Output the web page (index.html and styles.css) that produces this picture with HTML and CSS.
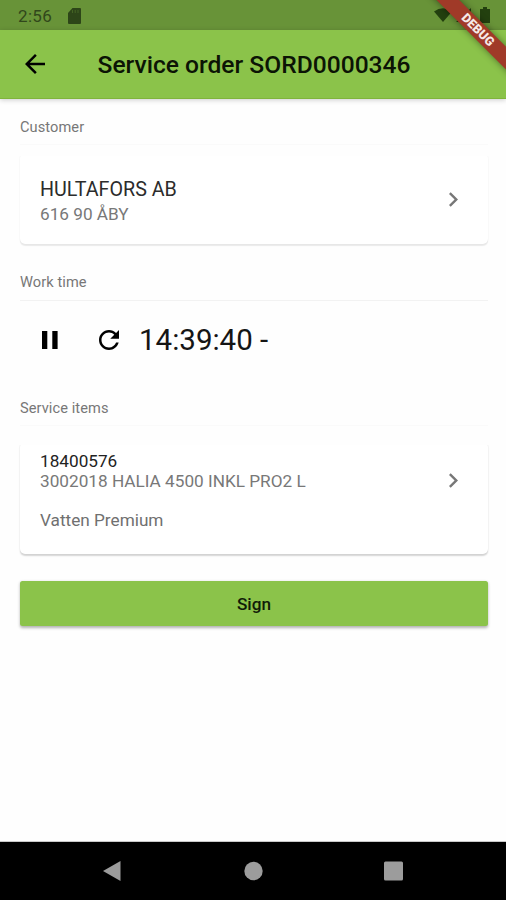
FILE: index.html
```html
<!DOCTYPE html>
<html lang="en">
<head>
<meta charset="utf-8">
<title>Service order</title>
<link rel="stylesheet" href="styles.css">
</head>
<body>
<div class="screen">
  <div class="status">
    <span class="clock">2:56</span>
    <svg class="sd" viewBox="0 0 13 16"><path d="M4.5 0H12a1 1 0 0 1 1 1v14a1 1 0 0 1-1 1H1a1 1 0 0 1-1-1V5z"/><path class="slots" d="M4.5 2v3M7.2 2v3M10 2v3"/></svg>
    <svg class="signals" viewBox="0 0 58 18"><path d="M0 4.5Q9-2 18 4.5L9 15z"/><path d="M37 1v14H22z"/><path d="M46 2h3V0h4v2h3v14H46z"/></svg>
  </div>
  <header class="appbar">
    <svg class="back" viewBox="4 4 16 16"><path d="M20 11H7.83l5.59-5.59L12 4l-8 8 8 8 1.41-1.41L7.83 13H20v-2z"/></svg>
    <h1>Service order SORD0000346</h1>
  </header>
  <div class="banner"><span>DEBUG</span></div>
  <main>
    <h2 class="faint">Customer</h2>
    <section class="card customer">
      <div>
        <p class="name">HULTAFORS AB</p>
        <p class="address">616 90 ÅBY</p>
      </div>
      <svg class="chevron" viewBox="8.6 6 7.4 12"><path d="M10 6 8.59 7.41 13.17 12l-4.58 4.59L10 18l6-6z"/></svg>
    </section>
    <h2 class="work">Work time</h2>
    <section class="timer">
      <svg class="pause" viewBox="0 0 16 18"><path d="M0 0h5.3v18H0zM10.3 0h5.3v18h-5.3z"/></svg>
      <svg class="refresh" viewBox="4 4 16 16"><path d="M17.65 6.35C16.2 4.9 14.21 4 12 4c-4.42 0-7.99 3.58-7.99 8s3.57 8 7.99 8c3.73 0 6.84-2.55 7.73-6h-2.08c-.82 2.33-3.04 4-5.65 4-3.31 0-6-2.69-6-6s2.69-6 6-6c1.66 0 3.14.69 4.22 1.78L13 11h7V4l-2.35 2.35z"/></svg>
      <span class="time">14:39:40 -</span>
    </section>
    <h2 class="faint">Service items</h2>
    <section class="card item">
      <div>
        <p class="number">18400576</p>
        <p class="product">3002018 HALIA 4500 INKL PRO2 L</p>
        <p class="kind">Vatten Premium</p>
      </div>
      <svg class="chevron" viewBox="8.6 6 7.4 12"><path d="M10 6 8.59 7.41 13.17 12l-4.58 4.59L10 18l6-6z"/></svg>
    </section>
    <button class="sign" type="button">Sign</button>
  </main>
  <nav>
    <svg viewBox="0 0 20 22"><path d="M18.5 1v20L1 11z"/></svg>
    <svg viewBox="0 0 20 22"><circle cx="10.5" cy="11" r="9.2"/></svg>
    <svg viewBox="0 0 20 22"><rect x="0" y="1.5" width="19" height="19" rx="1.5"/></svg>
  </nav>
</div>
</body>
</html>
```
FILE: styles.css
```css
* { box-sizing: border-box; }
body { margin: 0; font-family: Roboto, "Liberation Sans", sans-serif; }
h1, h2, p { margin: 0; font-weight: 400; }
svg { display: block; flex: none; }
.screen { position: relative; width: 506px; height: 900px; overflow: hidden; background: #fefefe; display: flex; flex-direction: column; }
.status { height: 30px; flex: none; background: #689338; display: flex; align-items: center; padding: 2px 14px 0 18px; color: #31471b; fill: #2d4518; }
.clock { font-size: 17px; letter-spacing: .35px; width: 50px; }
.sd { width: 13px; height: 16px; }
.slots { stroke: #689338; stroke-width: 1; opacity: .4; }
.signals { width: 58px; height: 18px; margin-left: auto; fill: #23400f; }
.appbar { height: 69px; flex: none; background: #8bc34a; border-bottom: 1px solid #80b43c; box-shadow: 0 1px 5px rgba(0,0,0,.2); display: flex; align-items: center; padding-left: 25px; z-index: 1; }
.back { width: 20px; height: 20px; margin-right: 52.5px; }
h1 { font-size: 24.6px; font-weight: 500; line-height: 30px; padding-top: 2px; color: #0c1405; white-space: nowrap; }
.banner { position: absolute; z-index: 2; left: 417.5px; top: 21.5px; width: 120px; height: 15.5px; transform: rotate(45deg); background: #a03a28; box-shadow: 0 0 7px rgba(0,0,0,.45); color: #f6e9e7; font-size: 12.6px; font-weight: 900; line-height: 15.5px; text-align: center; }
main { flex: 1; padding: 0 18px 0 20px; display: flex; flex-direction: column; }
h2 { font-size: 14.6px; line-height: 18px; color: #777; letter-spacing: .08px; border-bottom: 1px solid #f2f2f2; flex: none; height: 27px; }
h2.faint { border-color: #fafafa; }
main h2:first-child { margin-top: 19px; }
.card { display: flex; border-radius: 5px; background: #fff; justify-content: space-between; padding: 0 30.5px 0 20px; box-shadow: 0 1.5px 1.5px rgba(0,0,0,.16), 0 0 1.5px rgba(0,0,0,.08); white-space: nowrap; clip-path: inset(3px -5px -5px -5px); }
.chevron { width: 9px; height: 15px; fill: #777; }
.customer { height: 91px; margin-top: 8px; padding-top: 24px; box-shadow: 0 1.5px 1px rgba(0,0,0,.08), 0 0 1.5px rgba(0,0,0,.08); }
.customer .chevron { margin-top: 15px; }
.name { font-size: 19.7px; line-height: 25px; color: #2c2c2c; }
.address { font-size: 17.2px; line-height: 24px; color: #787878; }
h2.work { margin-top: 29px; height: 28px; }
.timer { height: 78px; display: flex; align-items: center; padding-left: 22px; }
.pause { width: 16px; height: 18px; }
.refresh { width: 20px; height: 20px; margin-left: 40.5px; }
.time { font-size: 29.5px; margin-left: 20.5px; color: #151515; white-space: nowrap; }
.timer + h2 { margin-top: 20px; }
.item { height: 112px; margin-top: 16px; padding-top: 9px; }
.item .chevron { margin-top: 22px; }
.number { font-size: 17.2px; line-height: 20px; color: #222; }
.product { font-size: 17.2px; line-height: 20px; color: #787878; }
.kind { font-size: 17.2px; line-height: 20px; color: #707070; margin-top: 19px; }
.sign { margin-top: 27px; height: 45px; flex: none; border: 0; border-radius: 2.5px; background: #8bc34a; box-shadow: 0 1.5px 3px rgba(0,0,0,.3); font: 500 17.2px/20px Roboto, "Liberation Sans", sans-serif; color: #111b08; padding: 0; }
nav { height: 58px; flex: none; background: #000; display: flex; align-items: center; justify-content: space-between; padding: 0 102px; fill: #9c9c9c; box-shadow: 0 -1px 0 #c9c9c9; }
nav svg { width: 20px; height: 22px; }
```
